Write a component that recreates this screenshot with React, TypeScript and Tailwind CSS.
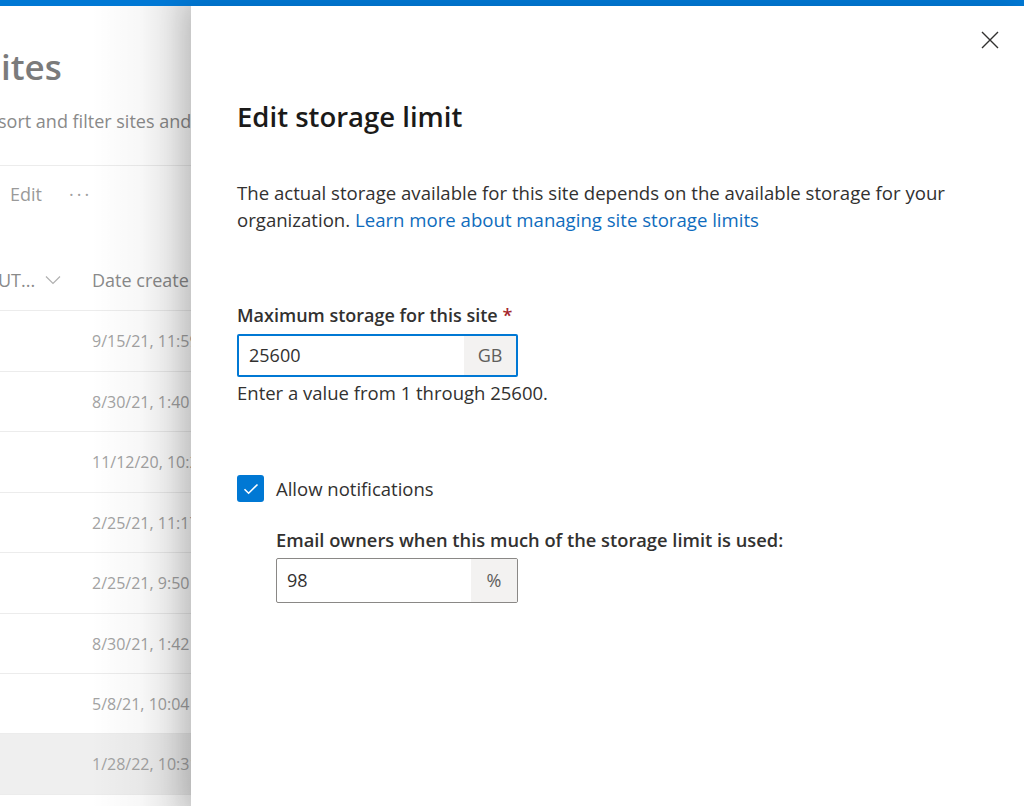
import React from "react";

const dates = [
  { text: "9/15/21, 11:59 AM", h: "h-[61px]" },
  { text: "8/30/21, 1:40 PM", h: "h-[60px]" },
  { text: "11/12/20, 10:22 AM", h: "h-[61px]" },
  { text: "2/25/21, 11:17 AM", h: "h-[60px]" },
  { text: "2/25/21, 9:50 AM", h: "h-[61px]" },
  { text: "8/30/21, 1:42 PM", h: "h-[60px]" },
  { text: "5/8/21, 10:04 AM", h: "h-[60px]" },
  { text: "1/28/22, 10:31 AM", h: "h-[61px]", selected: true },
];

function SitesBackground() {
  return (
    <div className="relative w-[191px] shrink-0 overflow-hidden bg-white">
      <div className="w-[191px]">
        <div className="pt-[39px] pl-[1px] text-[35px] leading-[44px] font-semibold text-[#7b7b7b]">
          ites
        </div>
        <div className="mt-[20px] -ml-[2px] whitespace-nowrap text-[18px] leading-[24px] text-[#8a8a8a]">
          sort and filter sites and
        </div>
        <div className="mt-[32px] border-t border-[#ececec]" />
        <div className="flex h-[56px] items-center gap-[27px] pl-[10px] text-[18px] text-[#9a9a9a]">
          <span>Edit</span>
          <span className="tracking-[3px] text-[#a0a0a0]">···</span>
        </div>
        <div className="mt-[28px] flex h-[61px] items-center border-b border-[#ececec] text-[18px] text-[#8a8a8a]">
          <span className="-ml-[2px] w-[94px] flex items-center gap-[10px]">
            UT...
            <svg width="16" height="10" viewBox="0 0 16 10" fill="none">
              <path d="M1 1.5L8 8.5L15 1.5" stroke="#b0b0b0" strokeWidth="1.2" />
            </svg>
          </span>
          <span className="whitespace-nowrap">Date create</span>
        </div>
        {dates.map((d) => (
          <div
            key={d.text}
            className={`flex ${d.h} items-center overflow-hidden border-b border-[#ececec] pl-[92px] text-[16px] text-[#a3a3a3] whitespace-nowrap ${
              d.selected ? "bg-[#efefef]" : ""
            }`}
          >
            {d.text}
          </div>
        ))}
      </div>
      <div className="pointer-events-none absolute inset-y-0 right-0 w-[100px] bg-gradient-to-r from-black/0 via-black/[0.03] to-black/[0.14]" />
    </div>
  );
}

function SuffixInput({
  value,
  suffix,
  focused,
  width,
  suffixWidth,
}: {
  value: string;
  suffix: string;
  focused?: boolean;
  width: string;
  suffixWidth: string;
}) {
  return (
    <div
      className={`flex ${width} overflow-hidden rounded-[2px] ${
        focused ? "h-[43px] border-2 border-[#0078d4]" : "h-[45px] border border-[#8a8886]"
      }`}
    >
      <div className="flex flex-1 items-center pl-[10px] text-[18px] text-[#323130]">{value}</div>
      <div
        className={`flex ${suffixWidth} items-center justify-center bg-[#f3f2f1] text-[18px] text-[#605e5c]`}
      >
        {suffix}
      </div>
    </div>
  );
}

export default function App() {
  return (
    <div
      className="flex h-[806px] w-[1024px] flex-col overflow-hidden bg-white"
      style={{ fontFamily: '"Open Sans", "Noto Sans", sans-serif' }}
    >
      <div className="h-[6px] bg-[#0078d4]" />
      <div className="flex flex-1">
        <SitesBackground />
        <div className="relative z-10 flex-1 bg-white shadow-[-8px_0_24px_rgba(0,0,0,0.12)]">
          <div className="flex justify-end pt-[24px] pr-[24px]">
            <button className="flex h-[20px] w-[20px] items-center justify-center">
              <svg width="18" height="18" viewBox="0 0 18 18" fill="none">
                <path d="M1 1L17 17M17 1L1 17" stroke="#323130" strokeWidth="1.4" />
              </svg>
            </button>
          </div>
          <div className="pl-[46px]">
            <h1 className="mt-[51px] text-[27.5px] leading-[32px] font-semibold text-[#1b1a19]">
              Edit storage limit
            </h1>
            <p className="mt-[46px] w-[740px] text-[18.6px] leading-[27px] text-[#323130]">
              The actual storage available for this site depends on the available storage for your
              organization.{" "}
              <a className="text-[#0f6cbd]" href="#">
                Learn more about managing site storage limits
              </a>
            </p>
            <div className="mt-[70px] text-[18px] leading-[24px] font-semibold text-[#323130]">
              Maximum storage for this site <span className="text-[#a4262c]">*</span>
            </div>
            <div className="mt-[7px]">
              <SuffixInput value="25600" suffix="GB" focused width="w-[281px]" suffixWidth="w-[52px]" />
            </div>
            <div className="mt-[4px] text-[18.5px] leading-[24px] text-[#323130]">
              Enter a value from 1 through 25600.
            </div>
            <label className="mt-[70px] flex items-center gap-[12px]">
              <span className="flex h-[27px] w-[27px] items-center justify-center rounded-[3px] bg-[#0078d4]">
                <svg width="16" height="12" viewBox="0 0 16 12" fill="none">
                  <path d="M1.5 6.2L5.6 10.2L14.5 1.5" stroke="white" strokeWidth="1.6" />
                </svg>
              </span>
              <span className="text-[18.5px] text-[#323130]">Allow notifications</span>
            </label>
            <div className="pl-[39px]">
              <div className="mt-[25px] text-[18.3px] leading-[24px] font-semibold text-[#323130]">
                Email owners when this much of the storage limit is used:
              </div>
              <div className="mt-[6px]">
                <SuffixInput value="98" suffix="%" width="w-[242px]" suffixWidth="w-[46px]" />
              </div>
            </div>
          </div>
        </div>
      </div>
    </div>
  );
}
